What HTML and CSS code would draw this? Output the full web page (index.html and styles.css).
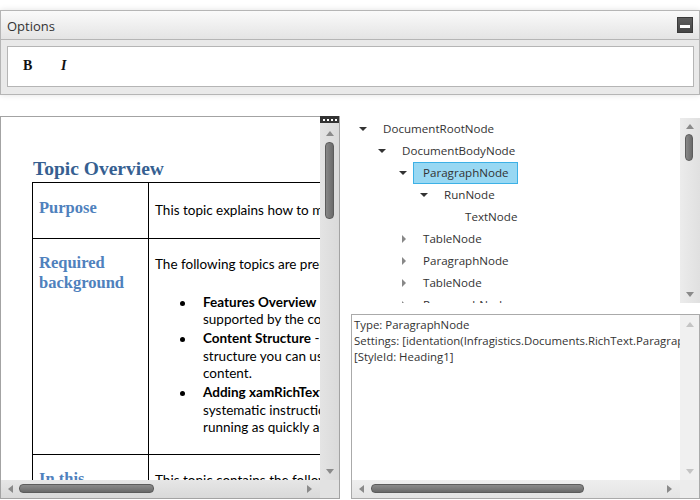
FILE: index.html
```html
<!DOCTYPE html>
<html>
<head>
<meta charset="utf-8">
<link rel="stylesheet" href="styles.css">
</head>
<body>
<div class="options">
  <div class="opt-head">
    <span class="opt-title">Options</span>
    <span class="min-btn"><span class="min-bar"></span></span>
  </div>
  <div class="opt-body">
    <div class="toolbar">
      <span class="tb-btn tb-bold">B</span>
      <span class="tb-btn tb-italic">I</span>
    </div>
  </div>
</div>

<div class="main">
  <div class="doc">
    <div class="doc-view">
      <div class="doc-content">
        <h1 class="doc-h1">Topic Overview</h1>
        <table class="doc-table">
          <tr class="row-purpose">
            <td class="c1"><span class="h2">Purpose</span></td>
            <td class="c2"><p class="txt">This topic explains how to manage the xamRichTextEditor document content</p></td>
          </tr>
          <tr class="row-req">
            <td class="c1"><span class="h2">Required background</span></td>
            <td class="c2">
              <p class="txt first">The following topics are prerequisites to understanding this topic:</p>
              <ul class="blist">
                <li><div><b>Features Overview</b> - this topic lists the features<br>supported by the control</div></li>
                <li><div><b>Content Structure</b> - this topic explains the<br>structure you can use to manage the<br>content.</div></li>
                <li><div><b>Adding xamRichTextEditor</b> - this topic provides<br>systematic instructions to get it up and<br>running as quickly as possible</div></li>
              </ul>
            </td>
          </tr>
          <tr class="row-this">
            <td class="c1"><span class="h2">In this<br>topic</span></td>
            <td class="c2"><p class="txt">This topic contains the following sections:</p></td>
          </tr>
        </table>
      </div>
      <div class="vscroll">
        <div class="grip"><i></i><i></i><i></i><i></i></div>
        <span class="arr up"></span>
        <div class="vtrack"><div class="vthumb doc-vthumb"></div></div>
        <span class="arr down"></span>
      </div>
    </div>
    <div class="hbar">
      <div class="hscroll">
        <span class="arr left"></span>
        <div class="htrack"><div class="hthumb doc-hthumb"></div></div>
        <span class="arr right"></span>
      </div>
      <div class="corner"></div>
    </div>
  </div>

  <div class="side">
    <div class="tree">
      <div class="tree-list">
        <div class="node l0"><span class="tog open"></span><span class="lbl">DocumentRootNode</span></div>
        <div class="node l1"><span class="tog open"></span><span class="lbl">DocumentBodyNode</span></div>
        <div class="node l2"><span class="tog open"></span><span class="lbl sel">ParagraphNode</span></div>
        <div class="node l3"><span class="tog open"></span><span class="lbl">RunNode</span></div>
        <div class="node l4"><span class="tog"></span><span class="lbl">TextNode</span></div>
        <div class="node l2"><span class="tog closed"></span><span class="lbl">TableNode</span></div>
        <div class="node l2"><span class="tog closed"></span><span class="lbl">ParagraphNode</span></div>
        <div class="node l2"><span class="tog closed"></span><span class="lbl">TableNode</span></div>
        <div class="node l2"><span class="tog closed"></span><span class="lbl">ParagraphNode</span></div>
      </div>
      <div class="vscroll tree-scroll">
        <span class="arr up"></span>
        <div class="vtrack"><div class="vthumb tree-vthumb"></div></div>
        <span class="arr down"></span>
      </div>
    </div>
    <div class="props">
      <div class="props-view">
        <div class="props-text">
          <div>Type: ParagraphNode</div>
          <div>Settings: [identation(Infragistics.Documents.RichText.ParagraphIndentation)]</div>
          <div>[StyleId: Heading1]</div>
        </div>
        <div class="vscroll props-vscroll">
          <span class="arr up light"></span>
          <div class="vtrack"></div>
          <span class="arr down light"></span>
        </div>
      </div>
      <div class="hbar props-hbar">
        <div class="hscroll">
          <span class="arr left"></span>
          <div class="htrack"><div class="hthumb props-hthumb"></div></div>
          <span class="arr right"></span>
        </div>
        <div class="corner"></div>
      </div>
    </div>
  </div>
</div>
</body>
</html>
```

FILE: styles.css
```css
html, body {
  margin: 0;
  padding: 0;
  background: #ffffff;
}
body {
  width: 700px;
  height: 500px;
  overflow: hidden;
  font-family: "Open Sans", "Noto Sans", sans-serif;
  color: #333;
}

/* ---------- Options panel ---------- */
.options {
  margin-top: 10px;
  height: 83px;
  border: 1px solid #b5b5b5;
  background: #e9e9e9;
  box-shadow: 0 0 6px rgba(0, 0, 0, 0.12);
  display: flex;
  flex-direction: column;
}
.opt-head {
  height: 28px;
  border-bottom: 1px solid #b5b5b5;
  background: linear-gradient(#fafafa, #e4e4e4);
  display: flex;
  align-items: center;
  justify-content: space-between;
  padding: 0 6px 0 6px;
}
.opt-title {
  font-size: 13px;
  color: #333;
  line-height: 16px;
  padding-top: 1px;
}
.min-btn {
  width: 14px;
  height: 10px;
  padding-bottom: 4px;
  border: 1px solid #3a3a3a;
  background: linear-gradient(#5e5e5e, #454545);
  display: flex;
  align-items: flex-end;
  justify-content: center;
}
.min-bar {
  width: 10px;
  height: 3px;
  background: #fff;
}
.opt-body {
  flex: 1;
  padding: 6px 5px 6px 6px;
  background: #e9e9e9;
}
.toolbar {
  background: #fff;
  border: 1px solid #b5b5b5;
  display: flex;
  align-items: center;
  padding-left: 15px;
  padding-bottom: 2px;
  box-sizing: border-box;
  height: 41px;
}
.tb-btn {
  font-family: "Liberation Serif", serif;
  font-size: 14px;
  font-weight: bold;
  color: #111;
}
.tb-bold { width: 38px; }
.tb-italic { font-style: italic; }

/* ---------- Main area ---------- */
.main {
  margin-top: 21px;
  height: 384px;
  display: flex;
}

/* Document panel */
.doc {
  width: 338px;
  height: 381px;
  border: 1px solid #a3a3a3;
  display: flex;
  flex-direction: column;
  background: #fff;
}
.doc-view {
  flex: 1;
  display: flex;
  min-height: 0;
}
.doc-content {
  flex: 1;
  overflow: hidden;
  padding-left: 31px;
  padding-top: 40px;
  font-family: Lato, "Open Sans", sans-serif;
  color: #000;
}
.doc-h1 {
  margin: 0 0 1px 1px;
  font-family: "Liberation Serif", serif;
  font-size: 19.5px;
  font-weight: bold;
  line-height: 24px;
  color: #365f91;
  white-space: nowrap;
}
.doc-table {
  border-collapse: collapse;
  width: 420px;
  table-layout: fixed;
}
.doc-table td {
  border: 1px solid #000;
  vertical-align: top;
  padding: 0 6px;
}
.doc-table .c1 { width: 103px; }
.h2 {
  display: block;
  font-family: "Liberation Serif", serif;
  font-weight: bold;
  font-size: 16.5px;
  line-height: 20px;
  color: #4f81bd;
}
.row-purpose .c1 { padding-top: 15px; padding-bottom: 20px; }
.row-purpose .c2 { padding-top: 19px; padding-bottom: 18px; }
.row-req .c1 { padding-top: 14px; }
.row-req .c2 { padding-top: 17px; padding-bottom: 16px; }
.row-this .c1 { padding-top: 14px; padding-bottom: 20px; }
.row-this .c2 { padding-top: 17px; padding-bottom: 20px; }
.txt {
  margin: 0;
  font-size: 13.5px;
  line-height: 17.5px;
  white-space: nowrap;
}
.row-req .txt.first { margin-bottom: 20px; }
.blist {
  margin: 0;
  padding-left: 25px;
  list-style: none;
  font-size: 13.5px;
  line-height: 17.5px;
  white-space: nowrap;
}
.blist li {
  display: flex;
  align-items: flex-start;
  margin-bottom: 1.5px;
}
.blist li::before {
  content: "";
  flex: none;
  width: 5px;
  height: 5px;
  border-radius: 50%;
  background: #000;
  margin-top: 7px;
  margin-right: 18px;
}
.blist b { font-weight: bold; }

/* Scrollbars */
.vscroll {
  width: 19px;
  background: linear-gradient(90deg, #e4e4e4, #dadada);
  display: flex;
  flex-direction: column;
  align-items: center;
}
.grip {
  width: 19px;
  height: 7px;
  background: #333;
  display: flex;
  justify-content: center;
  align-items: center;
  gap: 2px;
  margin-top: -1px;
}
.grip i {
  width: 2px;
  height: 2px;
  background: #fff;
}
.vtrack {
  flex: 1;
  width: 100%;
  position: relative;
}
.vthumb {
  position: absolute;
  left: 5px;
  width: 7px;
  border-radius: 4px;
  background: linear-gradient(90deg, #888, #6a6a6a);
  border: 1px solid #5c5c5c;
}
.doc-vthumb { top: 6px; height: 75px; }
.arr { display: block; width: 0; height: 0; }
.arr.up {
  margin-top: 8px;
  border-left: 4px solid transparent;
  border-right: 4px solid transparent;
  border-bottom: 5px solid #8a8a8a;
}
.arr.down {
  margin-bottom: 6px;
  border-left: 4px solid transparent;
  border-right: 4px solid transparent;
  border-top: 5px solid #8a8a8a;
}
.arr.light.up { border-bottom-color: #c4c4c4; }
.arr.light.down { border-top-color: #c4c4c4; }
.arr.left {
  margin-left: 7px;
  border-top: 4px solid transparent;
  border-bottom: 4px solid transparent;
  border-right: 5px solid #8a8a8a;
}
.arr.right {
  margin-right: 8px;
  border-top: 4px solid transparent;
  border-bottom: 4px solid transparent;
  border-left: 5px solid #8a8a8a;
}
.hbar {
  height: 18px;
  display: flex;
}
.hscroll {
  flex: 1;
  background: linear-gradient(#e6e6e6, #d9d9d9);
  display: flex;
  align-items: center;
}
.htrack {
  flex: 1;
  height: 100%;
  position: relative;
}
.hthumb {
  position: absolute;
  top: 4px;
  height: 7px;
  border-radius: 4px;
  background: linear-gradient(#8a8a8a, #6a6a6a);
  border: 1px solid #5c5c5c;
}
.doc-hthumb { left: 6px; width: 133px; }
.corner {
  width: 19px;
  background: #e2e2e2;
}

/* Right side */
.side {
  margin-left: 11px;
  width: 349px;
  display: flex;
  flex-direction: column;
}
.tree {
  height: 187px;
  display: flex;
}
.tree-list {
  flex: 1;
  overflow: hidden;
  padding-top: 2px;
  font-size: 11.6px;
  color: #333;
}
.node {
  height: 22px;
  display: flex;
  align-items: center;
  white-space: nowrap;
}
.tog {
  flex: none;
  width: 29px;
  height: 22px;
  display: flex;
  align-items: center;
  justify-content: flex-start;
  padding-left: 8px;
  box-sizing: border-box;
}
.tog.open::before {
  content: "";
  border-left: 4px solid transparent;
  border-right: 4px solid transparent;
  border-top: 4px solid #333;
}
.tog.closed::before {
  content: "";
  margin-left: 3px;
  border-top: 4px solid transparent;
  border-bottom: 4px solid transparent;
  border-left: 4px solid #888;
}
.lbl {
  padding: 0 9px 0 2px;
  height: 20px;
  line-height: 20px;
  border: 1px solid transparent;
}
.lbl.sel {
  background: #98d8f3;
  border-color: #3db1e6;
  padding: 0 8px 0 9px;
  margin-left: -7px;
}
.l0 { padding-left: 0; }
.l1 { padding-left: 19px; }
.l2 { padding-left: 40px; }
.l3 { padding-left: 61px; }
.l4 { padding-left: 82px; }
.tree-scroll {
  width: 20px;
  margin-top: 2px;
  background: linear-gradient(90deg, #ececec, #e0e0e0);
}
.tree-scroll .arr.up { margin-top: 6px; }
.tree-vthumb { top: 5px; height: 25px; left: 5px; width: 6px; }

.props {
  margin-top: 11px;
  height: 183px;
  border: 1px solid #aaa;
  display: flex;
  flex-direction: column;
  background: #fff;
}
.props-view {
  flex: 1;
  display: flex;
  min-height: 0;
}
.props-text {
  flex: 1;
  overflow: hidden;
  padding: 2px 0 0 2px;
  font-size: 11.4px;
  line-height: 16px;
  color: #333;
  white-space: nowrap;
}
.props-vscroll {
  width: 19px;
  background: #f0f0f0;
}
.props-vscroll .arr.up { margin-top: 7px; }
.props-hbar .hscroll { background: linear-gradient(#eeeeee, #e4e4e4); }
.props-hbar .corner { background: #ececec; }
.props-hthumb { left: 7px; width: 211px; }
```
